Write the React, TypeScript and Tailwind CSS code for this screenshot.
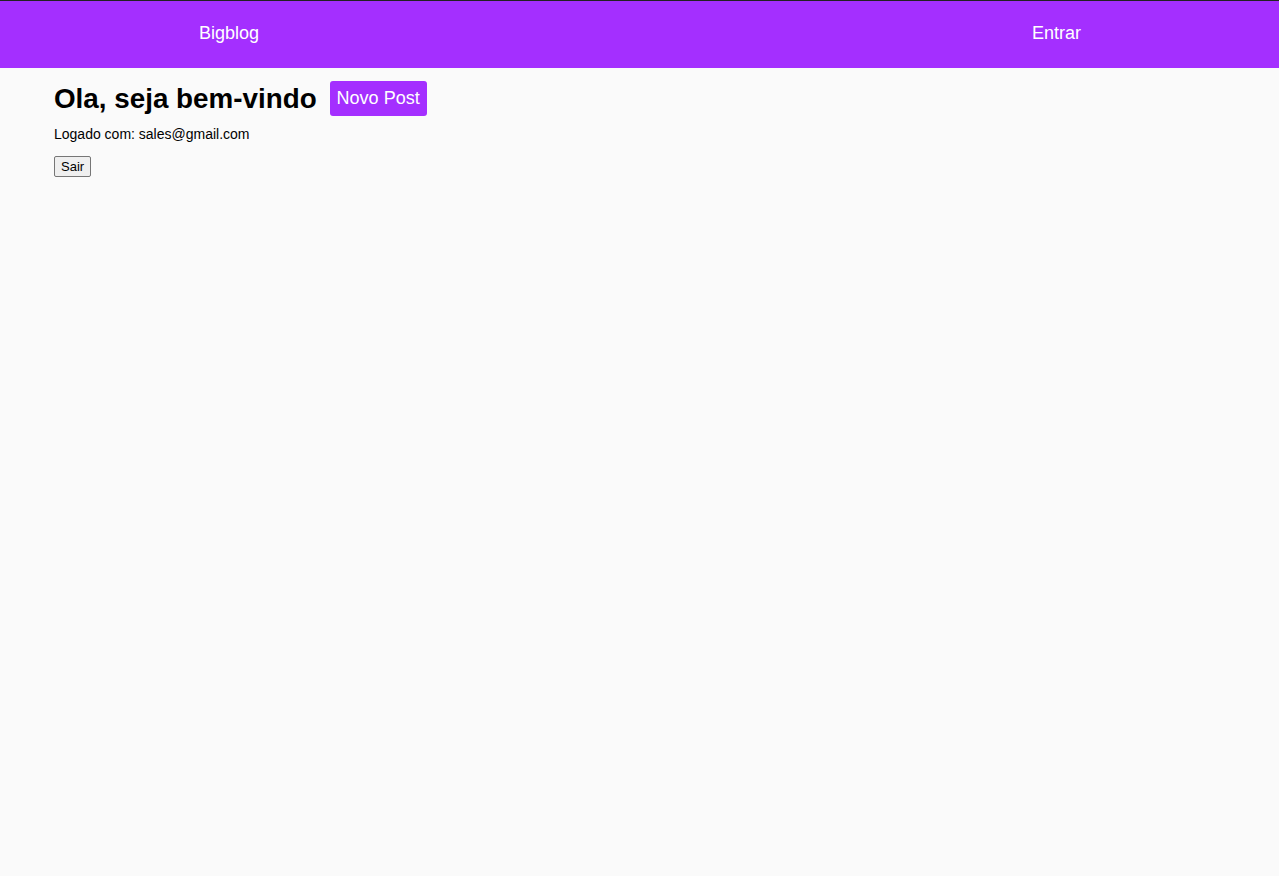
const App = () => {
  return (
    <div className="min-h-[876px] bg-[#fafafa] font-['Liberation_Sans',Arial,sans-serif] text-black">
      <header className="flex h-[68px] items-center justify-between border-t border-[#222222] bg-[#a42fff] pl-[199px] pr-[198px] text-[18px] text-white">
        <a href="#" className="-mt-[2px]">Bigblog</a>
        <a href="#" className="-mt-[2px]">Entrar</a>
      </header>

      <main className="px-[54px]">
        <div className="mt-[13px] flex items-center gap-[13px]">
          <h1 className="text-[27.8px] font-bold leading-none">Ola, seja bem-vindo</h1>
          <button className="h-[35px] rounded-[3px] bg-[#a42fff] px-[7px] text-[18px] text-white">
            Novo Post
          </button>
        </div>
        <p className="mt-[10px] text-[14px] leading-[16px]">Logado com: sales@gmail.com</p>
        <button className="mt-[14px] h-[21px] rounded-[2px] border border-[#767676] bg-[#efefef] px-[6px] text-[13px] leading-none">
          Sair
        </button>
      </main>
    </div>
  );
};

export default App;
